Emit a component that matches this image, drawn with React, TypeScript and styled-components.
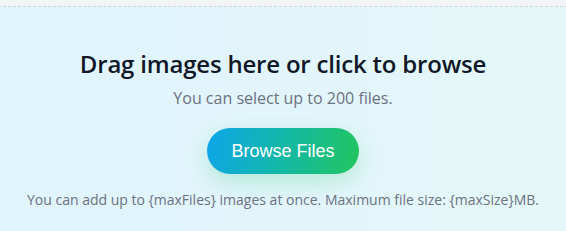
import React from 'react';
import styled, {createGlobalStyle} from 'styled-components';

const GlobalStyle = createGlobalStyle`
  html, body {
    margin: 0;
    padding: 0;
    background: #f3f4f6;
  }
  body {
    font-family: "Open Sans", "Noto Sans", sans-serif;
  }
`

const Page = styled.div`
  width: 566px;
  height: 231px;
  overflow: hidden;
  padding-top: 6px;
  box-sizing: border-box;
`

const DropZone = styled.div`
  margin: 0 -2px;
  border-top: 1px dashed #cfd5dc;
  background: linear-gradient(90deg, #e0f4fc 0%, #e2f5fb 55%, #e5f8f7 100%);
  min-height: 260px;
  padding-top: 41px;
  display: flex;
  flex-direction: column;
  align-items: center;
  text-align: center;
`

const Title = styled.h2`
  margin: 0;
  font-size: 24px;
  line-height: 32px;
  font-weight: 600;
  color: #111827;
  letter-spacing: -0.2px;
`

const Hint = styled.p`
  margin: 6px 0 0;
  font-size: 16px;
  line-height: 24px;
  color: #6b7280;
`

const BrowseButton = styled.button`
  margin-top: 18px;
  height: 46px;
  padding: 0 24px;
  border: none;
  border-radius: 9999px;
  background: linear-gradient(100deg, #0ea5e9 0%, #14b8a6 50%, #22c55e 100%);
  color: #ffffff;
  font-family: "Liberation Sans", Arial, sans-serif;
  font-size: 18px;
  box-shadow: 0 8px 22px rgba(34, 197, 94, 0.22);
  cursor: pointer;
`

const Note = styled.p`
  margin: 16px 0 0;
  font-size: 14px;
  line-height: 20px;
  color: #6b7280;
`

export default function App() {
  return (
    <>
      <GlobalStyle/>
      <Page>
        <DropZone>
          <Title>Drag images here or click to browse</Title>
          <Hint>You can select up to 200 files.</Hint>
          <BrowseButton type="button">Browse Files</BrowseButton>
          <Note>You can add up to {'{maxFiles}'} images at once. Maximum file size: {'{maxSize}'}MB.</Note>
        </DropZone>
      </Page>
    </>
  );
}
